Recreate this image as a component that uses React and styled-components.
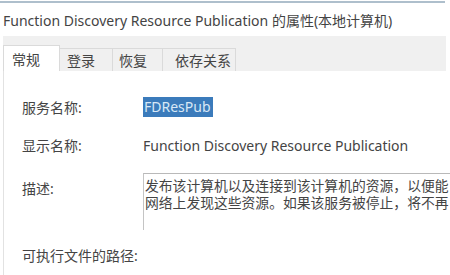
import React from "react";
import styled, { createGlobalStyle } from "styled-components";

const Global = createGlobalStyle`
  html, body {
    margin: 0;
    padding: 0;
    background: #ffffff;
  }
  body {
    font-family: "Noto Sans", "Noto Sans CJK SC", sans-serif;
    color: #3c3c3c;
    overflow: hidden;
  }
`;

const Window = styled.div`
  width: 450px;
  height: 275px;
  padding-top: 1px;
  box-sizing: border-box;
  display: flex;
  flex-direction: column;
  overflow: hidden;
`;

const Title = styled.div`
  width: 445px;
  height: 35px;
  border-top: 2px solid #aebfcc;
  padding-left: 3px;
  box-sizing: border-box;
  display: flex;
  align-items: center;
  font-size: 14px;
  color: #444;
  white-space: nowrap;
`;

const TabStrip = styled.div`
  margin-left: 3px;
  width: 443px;
  height: 35px;
  background: #f0f0f0;
  display: flex;
  align-items: flex-end;
`;

const Tab = styled.div`
  width: ${(p) => p.w}px;
  height: ${(p) => (p.active ? "26px" : "23px")};
  box-sizing: border-box;
  padding-left: ${(p) => p.pl}px;
  display: flex;
  align-items: center;
  font-size: 14px;
  color: #444;
  background: ${(p) => (p.active ? "#ffffff" : "#f0f0f0")};
  border: 1px solid #dadada;
  border-bottom: none;
  margin-left: -1px;
  &:first-child {
    margin-left: 0;
  }
`;

const Panel = styled.div`
  flex: 1;
  margin-left: 3px;
  border-left: 1px solid #e2e2e2;
  padding: 17px 0 0 18px;
  display: flex;
  flex-direction: column;
`;

const Row = styled.div`
  display: grid;
  grid-template-columns: 121px 1fr;
  align-items: ${(p) => (p.top ? "start" : "center")};
  height: ${(p) => p.h}px;
  padding-top: ${(p) => p.pt || 0}px;
  box-sizing: border-box;
  font-size: 14px;
  color: #444;
  white-space: nowrap;
`;

const Label = styled.div`
  padding-top: ${(p) => p.offset || 0}px;
`;

const Selected = styled.span`
  display: inline-block;
  background: #3b7bbb;
  color: #d8e8f6;
  padding: 0 2px 0 1px;
  line-height: 20px;
`;

const DescBox = styled.div`
  height: 53px;
  border-top: 1px solid #b9b9b9;
  border-left: 1px solid #c4c4c4;
  padding: 3px 0 0 1px;
  font-size: 13.8px;
  line-height: 17px;
  color: #444;
  overflow: hidden;
`;

const tabs = [
  { name: "常规", w: 57, pl: 8 },
  { name: "登录", w: 54, pl: 7 },
  { name: "恢复", w: 51, pl: 6 },
  { name: "依存关系", w: 74, pl: 12 },
];

export default function App() {
  return (
    <>
      <Global />
      <Window>
        <Title>Function Discovery Resource Publication 的属性(本地计算机)</Title>
        <TabStrip>
          {tabs.map((t, i) => (
            <Tab key={t.name} active={i === 0} w={t.w} pl={t.pl}>
              {t.name}
            </Tab>
          ))}
        </TabStrip>
        <Panel>
          <Row h={38}>
            <Label>服务名称:</Label>
            <div>
              <Selected>FDResPub</Selected>
            </div>
          </Row>
          <Row h={38}>
            <Label>显示名称:</Label>
            <div>Function Discovery Resource Publication</div>
          </Row>
          <Row h={79} pt={9} top>
            <Label offset={5}>描述:</Label>
            <DescBox>
              <div>发布该计算机以及连接到该计算机的资源，以便能</div>
              <div>网络上发现这些资源。如果该服务被停止，将不再</div>
            </DescBox>
          </Row>
          <Row h={24}>
            <Label>可执行文件的路径:</Label>
            <div />
          </Row>
        </Panel>
      </Window>
    </>
  );
}
